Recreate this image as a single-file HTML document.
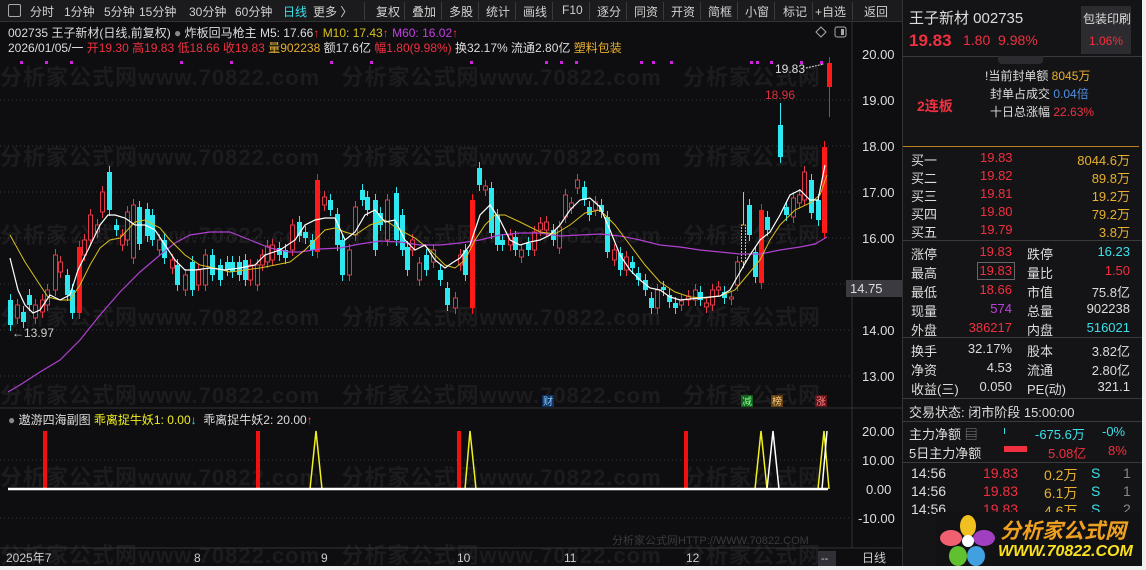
<!DOCTYPE html>
<html><head><meta charset="utf-8"><style>
*{margin:0;padding:0;box-sizing:border-box}
body{width:1146px;height:570px;background:#0e0e10;overflow:hidden;position:relative;font-family:"Liberation Sans","Noto Sans CJK SC",sans-serif;font-size:12px;color:#ccc}
.a{position:absolute;white-space:nowrap}
#tb{position:absolute;left:0;top:0;width:902px;height:22px;background:#1b1b1e;border-bottom:1px solid #333}
#tb span{position:absolute;top:3px;font-size:12px;color:#d0d0d0}
.sep{position:absolute;top:2px;width:1px;height:18px;background:#3a3a3a}
#rp{position:absolute;left:902px;top:0;width:240px;height:570px;background:#141416;border-left:1px solid #333}
.r{position:absolute;font-size:13px;white-space:nowrap}
.hl{position:absolute;left:0;width:240px;height:1px;background:#3a3a3a}
.wm{position:absolute;color:#1c1c1f;font-size:22px;font-weight:bold;white-space:nowrap;letter-spacing:1px}
</style></head><body>
<div class="wm" style="left:0;top:60px">分析家公式网www.70822.com&nbsp;&nbsp;&nbsp;分析家公式网www.70822.com&nbsp;&nbsp;&nbsp;分析家公式网</div>
<div class="wm" style="left:0;top:140px">分析家公式网www.70822.com&nbsp;&nbsp;&nbsp;分析家公式网www.70822.com&nbsp;&nbsp;&nbsp;分析家公式网</div>
<div class="wm" style="left:0;top:218px">分析家公式网www.70822.com&nbsp;&nbsp;&nbsp;分析家公式网www.70822.com&nbsp;&nbsp;&nbsp;分析家公式网</div>
<div class="wm" style="left:0;top:300px">分析家公式网www.70822.com&nbsp;&nbsp;&nbsp;分析家公式网www.70822.com&nbsp;&nbsp;&nbsp;分析家公式网</div>
<div class="wm" style="left:0;top:378px">分析家公式网www.70822.com&nbsp;&nbsp;&nbsp;分析家公式网www.70822.com&nbsp;&nbsp;&nbsp;分析家公式网</div>
<div class="wm" style="left:0;top:460px">分析家公式网www.70822.com&nbsp;&nbsp;&nbsp;分析家公式网www.70822.com&nbsp;&nbsp;&nbsp;分析家公式网</div>
<div class="wm" style="left:0;top:538px">分析家公式网www.70822.com&nbsp;&nbsp;&nbsp;分析家公式网www.70822.com&nbsp;&nbsp;&nbsp;分析家公式网</div>

<svg id="ch" class="a" style="left:0;top:0" width="902" height="570">
<g stroke="#3a3a3a" stroke-dasharray="1,3">
<line x1="0" y1="100" x2="852" y2="100"/><line x1="0" y1="146" x2="852" y2="146"/><line x1="0" y1="192" x2="852" y2="192"/><line x1="0" y1="238" x2="852" y2="238"/><line x1="0" y1="284" x2="852" y2="284"/><line x1="0" y1="330" x2="852" y2="330"/><line x1="0" y1="376" x2="852" y2="376"/>
<line x1="0" y1="460" x2="852" y2="460"/><line x1="0" y1="518" x2="852" y2="518"/>
</g>
<line x1="852" y1="22" x2="852" y2="548" stroke="#333"/>
<line x1="0" y1="408" x2="902" y2="408" stroke="#333"/>
<line x1="0" y1="548" x2="902" y2="548" stroke="#333"/>
<g id="cd"></g>
<polyline fill="none" stroke="#b040d0" stroke-width="1.2" points="8,392 20,385 40,372 60,360 80,340 100,315 120,292 140,272 160,255 175,243 190,235 210,232 230,232 250,240 270,248 290,252 300,252 320,249 340,248 360,244 380,241 400,242 420,245 440,245 460,243 480,240 500,235 520,233 540,233 560,236 580,235 600,234 620,236 640,240 660,245 680,247 700,250 720,252 740,254 760,254 780,250 800,247 815,244 827,237"/>
<polyline fill="none" stroke="#d8c020" stroke-width="1" points="10,235 25,262 40,285 48,297 60,300 70,300 80,285 90,265 100,248 110,240 120,238 135,222 145,220 160,228 170,240 185,255 200,265 215,268 230,272 245,270 260,268 275,265 290,262 305,250 315,240 325,230 335,228 345,232 355,235 370,225 385,220 400,230 415,238 430,250 445,265 455,268 465,260 475,240 485,225 495,215 505,215 520,222 540,232 555,234 570,225 585,213 600,210 615,225 630,245 645,265 660,282 675,292 690,297 705,298 720,296 735,290 750,272 760,260 770,240 780,225 795,210 810,203 820,195 827,175"/>
<polyline fill="none" stroke="#fff" stroke-width="1.2" points="10,258 18,290 25,305 33,313 40,310 50,295 60,300 70,295 78,270 88,250 100,225 108,215 115,215 125,218 135,225 145,225 155,230 165,245 175,260 185,270 195,270 210,268 225,270 240,268 255,265 265,255 280,250 295,240 305,225 315,220 325,218 335,218 345,240 355,232 365,215 375,210 385,222 395,220 405,240 415,250 425,245 435,260 445,268 452,263 460,258 470,245 480,215 490,205 500,220 510,240 520,245 530,242 540,240 550,235 560,225 570,210 580,200 590,198 600,207 610,230 620,255 630,270 640,280 650,288 660,290 670,297 680,300 690,299 700,298 710,297 720,296 730,290 740,272 750,255 760,240 770,232 780,215 790,195 800,190 810,200 818,200 825,165"/>
<g fill="#d020e0"><rect x="20" y="61" width="3" height="3"/><rect x="45" y="61" width="3" height="3"/><rect x="70" y="61" width="3" height="3"/><rect x="180" y="61" width="3" height="3"/><rect x="230" y="61" width="3" height="3"/><rect x="330" y="61" width="3" height="3"/><rect x="370" y="61" width="3" height="3"/><rect x="470" y="61" width="3" height="3"/><rect x="545" y="61" width="3" height="3"/><rect x="560" y="61" width="3" height="3"/><rect x="575" y="61" width="3" height="3"/><rect x="640" y="61" width="3" height="3"/><rect x="652" y="61" width="3" height="3"/><rect x="670" y="61" width="3" height="3"/><rect x="750" y="61" width="3" height="3"/><rect x="756" y="61" width="3" height="3"/><rect x="770" y="61" width="3" height="3"/><rect x="800" y="61" width="3" height="3"/><rect x="820" y="61" width="3" height="3"/></g>
<text x="775" y="73" fill="#ddd" font-size="12">19.83</text><line x1="806" y1="68" x2="824" y2="64" stroke="#ddd" stroke-dasharray="2,1"/>
<text x="765" y="99" fill="#e03040" font-size="12">18.96</text>
<text x="12" y="337" fill="#ccc" font-size="12">←13.97</text>
<g fill="#f01010"><rect x="43" y="431" width="4" height="58"/><rect x="256" y="431" width="4" height="58"/><rect x="457" y="431" width="4" height="58"/><rect x="684" y="431" width="4" height="58"/></g>
<g fill="none" stroke="#f0f020" stroke-width="1.5"><polyline points="310,489 316,431 322,489"/><polyline points="465,489 470,431 476,489"/><polyline points="755,489 761,431 767,489"/><polyline points="818,489 824,431 829,489"/></g>
<g fill="none" stroke="#fff" stroke-width="1.5"><polyline points="767,489 773,431 779,489"/><polyline points="822,489 827,431"/></g>
<line x1="8" y1="489" x2="828" y2="489" stroke="#fff" stroke-width="2.5"/>
<g fill="#ddd" font-size="13"><text x="862" y="59">20.00</text><text x="862" y="105">19.00</text><text x="862" y="151">18.00</text><text x="862" y="197">17.00</text><text x="862" y="243">16.00</text><text x="862" y="335">14.00</text><text x="862" y="381">13.00</text>
<text x="862" y="436">20.00</text><text x="862" y="465">10.00</text><text x="866" y="494">0.00</text><text x="858" y="523">-10.00</text></g>
<rect x="846" y="280" width="56" height="17" fill="#3a3a40"/><text x="850" y="293" fill="#ddd" font-size="13">14.75</text>
<g font-size="10"><rect x="542" y="395" width="12" height="12" fill="#103060"/><text x="543" y="405" fill="#8cf">财</text>
<rect x="741" y="395" width="12" height="12" fill="#106020"/><text x="742" y="405" fill="#8f8">减</text>
<rect x="771" y="395" width="12" height="12" fill="#604010"/><text x="772" y="405" fill="#fc8">榜</text>
<rect x="815" y="395" width="12" height="12" fill="#601018"/><text x="816" y="405" fill="#f88">涨</text></g>
<g fill="#ccc" font-size="12"><text x="6" y="562">2025年7</text><text x="194" y="562">8</text><text x="321" y="562">9</text><text x="457" y="562">10</text><text x="564" y="562">11</text><text x="686" y="562">12</text><text x="862" y="562">日线</text></g>
<rect x="818" y="551" width="18" height="16" fill="#303036"/><text x="821" y="562" fill="#ccc" font-size="11">--</text>
<text x="612" y="544" fill="#3a3a3e" font-size="11">分析家公式网HTTP://WWW.70822.COM</text>
<polygon points="816,32 821,27 826,32 821,37" fill="none" stroke="#aaa"/>
<rect x="835" y="27" width="11" height="10" fill="none" stroke="#aaa" rx="2"/><rect x="841" y="29" width="3" height="6" fill="#aaa"/>
</svg>

<div id="tb">
<span style="left:8px;top:4px;width:13px;height:13px;border:1px solid #aaa;border-radius:2px"></span>
<span style="left:30px">分时</span><span style="left:64px">1分钟</span><span style="left:104px">5分钟</span><span style="left:139px">15分钟</span><span style="left:189px">30分钟</span><span style="left:235px">60分钟</span><span style="left:283px;color:#3ce0e8">日线</span><span style="left:313px">更多 〉</span>
<div class="sep" style="left:364px"></div><span style="left:376px">复权</span><div class="sep" style="left:404px"></div><span style="left:412px">叠加</span><div class="sep" style="left:441px"></div><span style="left:449px">多股</span><div class="sep" style="left:478px"></div><span style="left:486px">统计</span><div class="sep" style="left:515px"></div><span style="left:523px">画线</span><div class="sep" style="left:552px"></div><span style="left:562px">F10</span><div class="sep" style="left:589px"></div><span style="left:597px">逐分</span><div class="sep" style="left:626px"></div><span style="left:634px">同资</span><div class="sep" style="left:663px"></div><span style="left:671px">开资</span><div class="sep" style="left:700px"></div><span style="left:708px">简框</span><div class="sep" style="left:737px"></div><span style="left:745px">小窗</span><div class="sep" style="left:774px"></div><span style="left:783px">标记</span><div class="sep" style="left:812px"></div><span style="left:815px">+自选</span><div class="sep" style="left:852px"></div><span style="left:864px">返回</span>
</div>
<div class="a" style="left:8px;top:24px;font-size:12px;color:#ddd">002735 王子新材(日线,前复权) <span style="color:#888">●</span> 炸板回马枪主 M5: 17.66<span style="color:#f33">↑</span> <span style="color:#d8c020">M10: 17.43</span><span style="color:#f33">↑</span> <span style="color:#c040e0">M60: 16.02</span><span style="color:#f33">↑</span></div>
<div class="a" style="left:8px;top:39px;font-size:12px;color:#ddd">2026/01/05/一 <span style="color:#f03040">开19.30 高19.83 低18.66 收19.83</span> <span style="color:#e8b030">量902238</span> 额17.6亿 <span style="color:#f03040">幅1.80(9.98%)</span> 换32.17% 流通2.80亿 <span style="color:#e8b030">塑料包装</span></div>
<div class="a" style="left:8px;top:411px;font-size:12px;color:#ddd"><span style="color:#888">●</span> 遨游四海副图 <span style="color:#f0f020">乖离捉牛妖1: 0.00</span><span style="color:#3ce0e8">↓</span> &nbsp;乖离捉牛妖2: 20.00<span style="color:#f33">↑</span></div>

<div id="rp">
<div class="r" style="left:6px;top:7px;font-size:15px;color:#ddd">王子新材 002735</div>
<div class="r" style="left:6px;top:31px;font-size:17px;font-weight:bold;color:#f03040">19.83</div>
<div class="r" style="left:60px;top:32px;font-size:14px;color:#f03040">1.80&nbsp;&nbsp;9.98%</div>
<div class="a" style="left:178px;top:6px;width:50px;height:48px;background:#2c2c30"></div>
<div class="r" style="left:180px;top:10px;font-size:12px;color:#ddd">包装印刷</div>
<div class="r" style="left:186px;top:34px;font-size:12px;color:#f03040">1.06%</div>
<div class="hl" style="top:56px"></div>
<div class="a" style="left:95px;top:56px;width:45px;height:8px;background:#2c2c30;border-radius:0 0 4px 4px"></div>
<div class="r" style="left:14px;top:96px;font-size:14px;font-weight:bold;color:#f03040">2连板</div>
<div class="r" style="left:82px;top:67px;font-size:12px;color:#ddd">ǃ当前封单额 <span style="color:#e8b030">8045万</span></div>
<div class="r" style="left:87px;top:85px;font-size:12px;color:#ddd">封单占成交 <span style="color:#5090e0">0.04倍</span></div>
<div class="r" style="left:87px;top:103px;font-size:12px;color:#ddd">十日总涨幅 <span style="color:#f03040">22.63%</span></div>
<div class="a" style="left:0;top:146px;width:236px;height:1px;background:#c08020"></div>
<div id="bk"></div>
<div class="hl" style="top:240px"></div>
<div class="hl" style="top:337px"></div>
<div class="hl" style="top:398px"></div>
<div class="r" style="left:6px;top:402px;color:#ddd">交易状态: 闭市阶段 15:00:00</div>
<div class="hl" style="top:421px"></div>
<div class="r" style="left:6px;top:424px;color:#ddd">主力净额 <span style="color:#888">▤</span></div>
<div class="a" style="left:101px;top:428px;width:1px;height:6px;background:#3ce0e8"></div>
<div class="r" style="left:132px;top:424px;color:#3ce0e8">-675.6万</div><div class="r" style="left:199px;top:424px;color:#3ce0e8">-0%</div>
<div class="r" style="left:6px;top:443px;color:#ddd">5日主力净额</div>
<div class="a" style="left:101px;top:446px;width:23px;height:6px;background:#f03040"></div>
<div class="r" style="left:145px;top:443px;color:#f03040">5.08亿</div><div class="r" style="left:205px;top:443px;color:#f03040">8%</div>
<div class="hl" style="top:462px"></div>
<div id="tk"></div>
</div>
<div class="a" style="left:1142px;top:0;width:4px;height:570px;background:#f0f0f0"></div>
<div class="a" style="left:0;top:566px;width:1146px;height:4px;background:#f0f0f0"></div>

<div class="a" style="left:936px;top:512px;width:204px;height:54px;background:#121214"></div>
<svg class="a" style="left:940px;top:514px" width="56" height="52">
<ellipse cx="28" cy="12" rx="8" ry="11" fill="#f0c020"/><ellipse cx="44" cy="24" rx="11" ry="8" fill="#a040c0"/><ellipse cx="36" cy="42" rx="9" ry="10" fill="#40a0e0"/><ellipse cx="18" cy="42" rx="9" ry="10" fill="#60c030"/><ellipse cx="11" cy="24" rx="11" ry="8" fill="#f06070"/><circle cx="28" cy="27" r="6" fill="#fff"/></svg>
<div class="a" style="left:1000px;top:515px;font-size:21px;font-weight:bold;font-style:italic;color:#f0a020">分析家公式网</div>
<div class="a" style="left:998px;top:543px;font-size:16px;font-weight:bold;font-style:italic;color:#f8e020">WWW.70822.COM</div>

<script>
var C=[[8,300,325,'c'],[15,305,318,'r'],[21,312,322,'c'],[27,295,305,'c'],[33,305,318,'r'],[40,300,312,'r'],[45,290,305,'r'],[53,255,290,'r'],[58,262,272,'r'],[65,275,295,'c'],[70,290,313,'c'],[77,247,313,'R'],[82,240,255,'r'],[88,215,240,'r'],[95,225,232,'r'],[100,192,212,'r'],[107,172,210,'c'],[114,225,230,'c'],[120,235,245,'r'],[125,212,240,'r'],[131,205,258,'r'],[137,207,244,'c'],[145,209,236,'c'],[150,215,240,'c'],[157,240,250,'r'],[162,240,258,'c'],[170,260,268,'r'],[175,265,285,'c'],[183,275,290,'r'],[190,262,290,'c'],[196,270,285,'r'],[203,255,285,'r'],[210,255,275,'c'],[218,265,280,'c'],[225,262,270,'c'],[230,262,272,'c'],[237,262,275,'c'],[243,260,280,'c'],[248,265,280,'r'],[255,265,285,'r'],[260,255,265,'r'],[265,246,262,'r'],[270,245,260,'r'],[277,248,255,'c'],[283,250,258,'c'],[290,225,250,'r'],[297,222,236,'c'],[303,232,238,'c'],[310,240,250,'c'],[315,180,252,'R'],[322,197,205,'r'],[328,200,210,'c'],[335,214,245,'c'],[340,240,275,'c'],[347,250,275,'r'],[353,207,235,'r'],[360,190,200,'c'],[365,197,210,'c'],[373,200,250,'c'],[378,213,225,'c'],[385,200,240,'r'],[394,193,240,'c'],[400,215,250,'c'],[405,247,270,'c'],[410,240,250,'r'],[417,263,280,'r'],[424,255,270,'c'],[431,250,262,'r'],[438,270,280,'c'],[445,288,305,'c'],[453,298,308,'r'],[458,255,265,'r'],[463,250,275,'c'],[470,200,308,'R'],[477,168,185,'c'],[483,186,190,'r'],[489,188,233,'c'],[495,215,245,'c'],[500,240,245,'c'],[508,235,245,'r'],[513,237,250,'c'],[519,250,257,'r'],[526,243,250,'c'],[532,232,250,'r'],[538,223,230,'r'],[544,222,230,'r'],[551,230,240,'c'],[557,227,248,'r'],[563,195,217,'r'],[569,203,208,'r'],[575,180,188,'r'],[582,187,200,'c'],[587,207,215,'c'],[593,202,210,'r'],[599,205,212,'c'],[605,217,252,'c'],[612,250,260,'r'],[618,253,270,'c'],[624,257,270,'r'],[630,262,268,'c'],[636,273,280,'c'],[643,280,290,'c'],[649,298,308,'c'],[655,290,308,'r'],[661,287,290,'c'],[667,295,302,'c'],[673,303,308,'c'],[679,301,305,'r'],[686,296,300,'r'],[693,290,300,'r'],[698,292,300,'c'],[704,303,307,'r'],[710,290,305,'r'],[716,287,290,'r'],[722,292,298,'c'],[729,297,299,'r'],[735,262,285,'r'],[741,225,262,'y'],[747,205,235,'c'],[753,252,277,'c'],[759,210,283,'R'],[765,217,230,'c'],[778,125,157,'c'],[784,207,215,'c'],[791,198,217,'r'],[797,195,203,'r'],[802,172,200,'r'],[809,180,213,'c'],[816,200,220,'c'],[822,147,233,'R'],[827,63,87,'R']];
var s='';C.forEach(function(d){var x=d[0],t=d[1],b=d[2],k=d[3];var col=k=='c'?'#2ee8f0':(k=='y'?'#f0c020':(k=='R'?'#ff1a1a':'#e03a48'));var wt=t-6,wb=b+6;if(x==778)wt=103;if(x==827)wb=117;if(x==741)wt=192;
s+='<line x1="'+(x+2.5)+'" y1="'+wt+'" x2="'+(x+2.5)+'" y2="'+wb+'" stroke="'+col+'"/>';
if(k=='c'||k=='R')s+='<rect x="'+x+'" y="'+t+'" width="5" height="'+(b-t)+'" fill="'+col+'"/>';
else s+='<rect x="'+(x+0.5)+'" y="'+t+'" width="4" height="'+(b-t)+'" fill="#0e0e10" stroke="'+col+'" '+(k=='y'?'stroke-dasharray="2,1"':'')+'/>';});
document.getElementById('cd').innerHTML=s;
var B=[['买一','19.83','8044.6万'],['买二','19.82','89.8万'],['买三','19.81','19.2万'],['买四','19.80','79.2万'],['买五','19.79','3.8万']];
var h='';B.forEach(function(b,i){var y=150+i*18;h+='<div class="r" style="left:8px;top:'+y+'px;color:#ddd">'+b[0]+'</div><div class="r" style="left:77px;top:'+y+'px;color:#f03040">'+b[1]+'</div><div class="r" style="right:12px;top:'+y+'px;color:#e8b030">'+b[2]+'</div>';});
var Q=[['涨停','19.83','#f03040','跌停','16.23','#3ce0e8'],['最高','19.83','#f03040','量比','1.50','#f03040'],['最低','18.66','#f03040','市值','75.8亿','#ddd'],['现量','574','#c040e0','总量','902238','#ddd'],['外盘','386217','#f03040','内盘','516021','#3ce0e8']];
Q.forEach(function(q,i){var y=244+i*19;h+='<div class="r" style="left:8px;top:'+y+'px;color:#ddd">'+q[0]+'</div><div class="r" style="right:130px;top:'+y+'px;color:'+q[2]+'">'+q[1]+'</div><div class="r" style="left:124px;top:'+y+'px;color:#ddd">'+q[3]+'</div><div class="r" style="right:12px;top:'+y+'px;color:'+q[5]+'">'+q[4]+'</div>';});
h+='<div class="a" style="left:74px;top:262px;width:38px;height:18px;border:1px solid #666"></div>';
var Z=[['换手','32.17%','股本','3.82亿'],['净资','4.53','流通','2.80亿'],['收益(三)','0.050','PE(动)','321.1']];
Z.forEach(function(q,i){var y=341+i*19;h+='<div class="r" style="left:8px;top:'+y+'px;color:#ddd">'+q[0]+'</div><div class="r" style="right:130px;top:'+y+'px;color:#ddd">'+q[1]+'</div><div class="r" style="left:124px;top:'+y+'px;color:#ddd">'+q[2]+'</div><div class="r" style="right:12px;top:'+y+'px;color:#ddd">'+q[3]+'</div>';});
document.getElementById('bk').innerHTML=h;
var T=[['0.2万','1'],['6.1万','1'],['4.6万','2']];h='';
T.forEach(function(t,i){var y=465+i*18;h+='<div class="r" style="left:8px;top:'+y+'px;color:#ddd;font-size:14px">14:56</div><div class="r" style="left:80px;top:'+y+'px;color:#f03040;font-size:14px">19.83</div><div class="r" style="left:141px;top:'+y+'px;color:#e8b030;font-size:14px">'+t[0]+'</div><div class="r" style="left:188px;top:'+y+'px;color:#3ce0e8;font-size:14px">S</div><div class="r" style="left:220px;top:'+y+'px;color:#888;font-size:14px">'+t[1]+'</div>';});
document.getElementById('tk').innerHTML=h;
</script>
</body></html>
